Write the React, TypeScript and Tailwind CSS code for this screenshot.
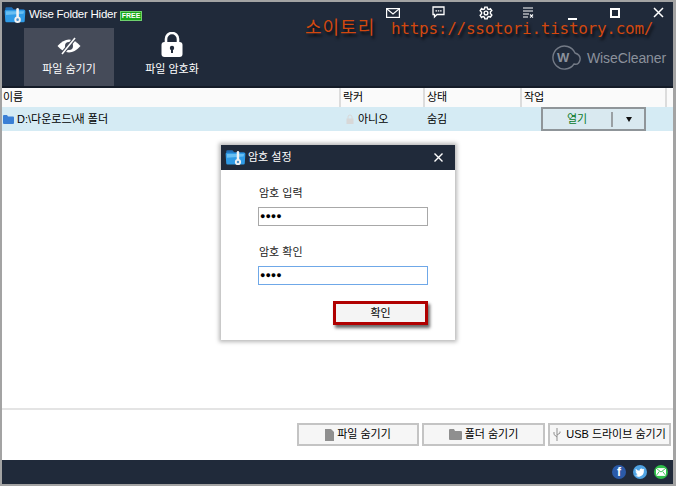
import React from 'react';

const FONT = { fontFamily: '"Liberation Sans", "Noto Sans CJK KR", sans-serif' };

const FolderLogo = ({ size = 34 }: { size?: number }) => (
  <svg width={size} height={size * 0.8} viewBox="0 0 34 27">
    <path d="M2 4 Q2 2 4 2 L12 2 L15 5 L30 5 Q32 5 32 7 L32 10 L2 10 Z" fill="#1f6fb8" />
    <path d="M1 8 Q1 6 3 6 L31 6 Q33 6 33 8 L32 23 Q32 25 30 25 L4 25 Q2 25 2 23 Z" fill="#2f9be6" />
    <path d="M3 8 L31 8 L30 12 L3 14 Z" fill="#69bff2" />
    <rect x="19" y="3" width="4" height="16" rx="2" fill="#f2f2f2" />
    <circle cx="21" cy="21" r="5" fill="#f2f2f2" />
    <circle cx="21" cy="21" r="2" fill="#4a90c8" />
  </svg>
);

const TopIcons = () => (
  <div className="flex items-center h-[24px] absolute top-0 left-[391px] text-white">
    <svg width="14" height="12" viewBox="0 0 14 12" className="ml-[-7px] mt-[-3px]" fill="none" stroke="white" strokeWidth="1.2">
      <rect x="0.6" y="1.6" width="12.8" height="8.8" />
      <path d="M1 2 L7 7 L13 2" />
    </svg>
    <svg width="13" height="13" viewBox="0 0 13 13" className="ml-[32px] mt-[-3px]" fill="none" stroke="white" strokeWidth="1.3">
      <path d="M1 1 H12 V8.5 H5 L2.5 11 V8.5 H1 Z" />
      <path d="M3.5 4.8 H5 M5.8 4.8 H7.3 M8.1 4.8 H9.6" />
    </svg>
    <svg width="14" height="14" viewBox="0 0 24 24" className="ml-[34px] mt-[-3px]" fill="none" stroke="white" strokeWidth="2.4">
      <path d="M10 2 H14 L14.6 5 L17 6 L19.6 4.4 L22 7.8 L19.6 10 V13 L22 15.4 L19.6 19 L17 18 L14.6 19.4 L14 22 H10 L9.4 19.4 L7 18 L4.4 19.6 L2 16 L4.4 13.4 V10.6 L2 8 L4.4 4.4 L7 6 L9.4 5 Z" />
      <circle cx="12" cy="12" r="3.2" />
    </svg>
    <svg width="11" height="12" viewBox="0 0 11 12" className="ml-[30px] mt-[-3px]" fill="none" stroke="white" strokeWidth="1.1">
      <path d="M0 1 H10 M0 4 H10 M0 7 H6 M0 10 H5 M7 7.5 L10 10.5 M10 7.5 L7 10.5" />
    </svg>
    <div className="ml-[34px] mt-[9px] w-[9px] h-[2px] bg-white" />
    <div className="ml-[33px] mt-[-3px] w-[10px] h-[10px] border-2 border-white" />
    <svg width="11" height="11" viewBox="0 0 11 11" className="ml-[33px] mt-[-3px]" stroke="white" strokeWidth="1.5">
      <path d="M1 1 L10 10 M10 1 L1 10" />
    </svg>
  </div>
);

const FooterButton = ({ width, icon, label }: { width: string; icon: React.ReactNode; label: string }) => (
  <button className={`${width} h-[23px] flex items-center justify-center gap-[3px] bg-[#f6f6f6] border-2 border-[#c4c4c4] text-[11px] text-black whitespace-nowrap`}>
    {icon}
    <span>{label}</span>
  </button>
);

export default function App() {
  return (
    <div style={FONT} className="relative w-[676px] h-[486px] overflow-hidden bg-[#a3a3a3] pt-[2px] pl-[2px] pr-[3px] pb-[2px]">
      <div className="relative flex flex-col h-full bg-white">
        {/* header */}
        <header className="h-[86px] bg-[#202a3a] border-b-2 border-[#141b27] shrink-0 relative">
          <div className="flex items-center h-[26px] pl-[2px]">
            <FolderLogo size={22} />
            <span className="ml-[3px] text-[11.5px] text-white tracking-[-0.25px]">Wise Folder Hider</span>
            <span className="ml-[3px] mt-[2px] bg-[#1aa81a] text-white text-[7px] font-bold px-[1px] leading-[8px] border border-[#6fd06f]">FREE</span>
          </div>
          <div className="flex gap-[13px] pl-[22px]">
            <div className="w-[90px] h-[58px] bg-[#454b59] flex flex-col items-center pt-[8px]">
              <svg width="24" height="20" viewBox="0 0 24 20">
                <path d="M0.5 10 Q12 -3 23.5 10 Q12 23 0.5 10 Z" fill="white" />
                <circle cx="12" cy="10" r="4" fill="#454b59" />
                <path d="M5 18 L18 2" stroke="#454b59" strokeWidth="3.6" />
                <path d="M5 18 L18 2" stroke="white" strokeWidth="1.6" />
              </svg>
              <span className="mt-[5px] text-[11px] text-white">파일 숨기기</span>
            </div>
            <div className="w-[90px] h-[58px] flex flex-col items-center pt-[4px]">
              <svg width="22" height="25" viewBox="0 0 22 25">
                <path d="M5 12 V7 a6 6 0 0 1 12 0 V12" fill="none" stroke="white" strokeWidth="2.6" />
                <rect x="0.5" y="10" width="21" height="15" rx="3" fill="white" />
                <circle cx="11" cy="16" r="2.2" fill="#202a3a" />
                <rect x="10" y="17" width="2" height="4" fill="#202a3a" />
              </svg>
              <span className="mt-[4px] text-[11px] text-white">파일 암호화</span>
            </div>
          </div>
          <TopIcons />
          <div className="absolute left-[550px] top-[43px] flex items-center text-[#8b919c]">
            <svg width="30" height="26" viewBox="0 0 30 26" fill="none">
              <path d="M22 19 A11.5 11.5 0 1 1 23 8 Q29 10 28 15 Q27 20 22 19 Z" stroke="#737a86" strokeWidth="1.4" />
              <text x="5" y="17" fontSize="13" fontWeight="700" fill="#8b919c" fontFamily="Liberation Sans">W</text>
            </svg>
            <span className="ml-[5px] text-[14px] tracking-[-0.1px]">WiseCleaner</span>
          </div>
        </header>

        {/* column header */}
        <div className="flex h-[19px] bg-[#fafafa] text-[11px] text-black shrink-0 leading-[19px]">
          <div className="w-[339px] pl-[1px] border-r-2 border-[#dcdcdc]">이름</div>
          <div className="w-[84px] pl-[2px] border-r-2 border-[#dcdcdc]">락커</div>
          <div className="w-[97px] pl-[2px] border-r-2 border-[#dcdcdc]">상태</div>
          <div className="w-[145px] pl-[2px] border-r-2 border-[#dcdcdc]">작업</div>
        </div>

        {/* folder row */}
        <div className="flex items-center h-[24px] bg-[#d5ebf4] text-[11px] text-black shrink-0">
          <svg width="11" height="9" viewBox="0 0 11 9" className="ml-[1px]">
            <path d="M0 1 Q0 0 1 0 H4 L5 1.5 H10 Q11 1.5 11 2.5 V8 Q11 9 10 9 H1 Q0 9 0 8 Z" fill="#3a7fd5" />
          </svg>
          <span className="ml-[3px] w-[328px] pt-[1px]">D:\다운로드\새 폴더</span>
          <svg width="8" height="10" viewBox="0 0 8 10" className="ml-[1px]">
            <path d="M2 5 V3 a2 2 0 0 1 4 0 V5" fill="none" stroke="#d8d8d8" strokeWidth="1" />
            <rect x="0.5" y="4.5" width="7" height="5.5" fill="#d8d8d8" />
          </svg>
          <span className="ml-[4px] w-[69px] pt-[1px]">아니오</span>
          <span className="w-[114px] pt-[1px]">숨김</span>
          <div className="w-[105px] h-[24px] flex items-center border-2 border-[#8f9599] bg-[#d9e9f0]">
            <span className="w-[68px] text-center text-[#0a7a2a]">열기</span>
            <div className="w-[2px] h-[15px] bg-[#9aa0a4]" />
            <span className="flex-1 flex justify-center">
              <span className="w-0 h-0 border-l-[3px] border-r-[3px] border-t-[5px] border-l-transparent border-r-transparent border-t-[#111]" />
            </span>
          </div>
        </div>

        <div className="flex-1" />

        {/* bottom */}
        <div className="h-[52px] border-t-2 border-[#e4e4e4] shrink-0 flex justify-end items-start gap-[3px] pt-[13px] pr-[2px]">
          <FooterButton
            width="w-[122px]"
            label="파일 숨기기"
            icon={
              <svg width="9" height="12" viewBox="0 0 9 12">
                <path d="M0 0 H6 L9 3 V12 H0 Z" fill="#8f8f8f" />
              </svg>
            }
          />
          <FooterButton
            width="w-[123px]"
            label="폴더 숨기기"
            icon={
              <svg width="13" height="11" viewBox="0 0 13 11">
                <path d="M0 1 Q0 0 1 0 H5 L6 2 H12 Q13 2 13 3 V10 Q13 11 12 11 H1 Q0 11 0 10 Z" fill="#8f8f8f" />
              </svg>
            }
          />
          <FooterButton
            width="w-[123px] gap-[5px]"
            label="USB 드라이브 숨기기"
            icon={
              <svg width="8" height="13" viewBox="0 0 8 13" fill="none" stroke="#8f8f8f" strokeWidth="1">
                <path d="M4 0 V13 M4 9 L1 6.5 V4 M4 7 L7 5 V3.5" />
              </svg>
            }
          />
        </div>

        {/* status bar */}
        <footer className="h-[24px] bg-[#202a3a] shrink-0 flex items-center justify-end gap-[7px] pr-[5px]">
          <span className="w-[14px] h-[14px] rounded-full bg-[#2b5aa8] flex items-center justify-center text-white text-[12px] font-bold leading-none">f</span>
          <span className="w-[14px] h-[14px] rounded-full bg-[#4fa3e3] flex items-center justify-center">
            <svg width="10" height="9" viewBox="0 0 24 20"><path d="M23 3 Q21 4 20 4 Q22 3 22 1 Q20 2 19 2 C15 -2 10 2 11 6 Q5 6 2 1 Q0 5 4 8 Q2 8 1 7 Q1 11 5 12 Q4 13 2 12 Q4 16 7 16 Q4 18 0 18 C12 24 23 15 21 5 Q22 4 23 3 Z" fill="white" /></svg>
          </span>
          <span className="w-[14px] h-[14px] rounded-full bg-[#2fc04a] flex items-center justify-center">
            <svg width="10" height="8" viewBox="0 0 9 7" fill="white"><rect width="9" height="7" /><path d="M0 0 L4.5 3.5 L9 0 M0 7 L3 3 M9 7 L6 3" stroke="#2fc04a" strokeWidth="0.8" fill="none" /></svg>
          </span>
        </footer>

        {/* dialog */}
        <div className="absolute left-[219px] top-[143px] w-[234px] h-[195px] bg-white shadow-[0_0_4px_2px_rgba(0,0,0,0.28)] flex flex-col">
          <div className="h-[25px] bg-[#202a3a] flex items-center pl-[4px] pr-[12px] text-white shrink-0">
            <FolderLogo size={21} />
            <span className="ml-[2px] text-[11px]">암호 설정</span>
            <svg width="9" height="9" viewBox="0 0 9 9" className="ml-auto" stroke="white" strokeWidth="1.4">
              <path d="M0.5 0.5 L8.5 8.5 M8.5 0.5 L0.5 8.5" />
            </svg>
          </div>
          <div className="flex flex-col pl-[37px] text-[11px] text-[#222]">
            <span className="mt-[16px] ml-[1px] leading-[14px]">암호 입력</span>
            <div className="mt-[7px] w-[170px] h-[19px] border border-[#a8a8a8] pl-[1px] flex items-center text-[9px] leading-none text-black">●●●●</div>
            <span className="mt-[19px] ml-[1px] leading-[14px]">암호 확인</span>
            <div className="mt-[7px] w-[170px] h-[19px] border border-[#6fa8e8] pl-[1px] flex items-center text-[9px] leading-none text-black">●●●●</div>
          </div>
          <div className="mt-[16px] ml-[112px] w-[95px] h-[24px] bg-[#f4f4f4] border-[3px] border-[#b00000] shadow-[2px_3px_3px_rgba(0,0,0,0.6)] flex items-center justify-center text-[11px] text-black">
            확인
          </div>
        </div>
      </div>

      {/* watermark */}
      <div
        className="absolute left-[305px] top-[16px] flex items-baseline leading-[24px] text-[#d2480f] whitespace-nowrap [text-shadow:2px_3px_3px_rgba(0,0,0,0.8)]"
        style={{ fontFamily: '"DejaVu Sans Mono", "Noto Sans CJK KR", monospace' }}
      >
        <span className="w-[86px] text-[18px] tracking-[1px]">소이토리</span>
        <span className="text-[16px] tracking-[-0.27px]">https://ssotori.tistory.com/</span>
      </div>
    </div>
  );
}
